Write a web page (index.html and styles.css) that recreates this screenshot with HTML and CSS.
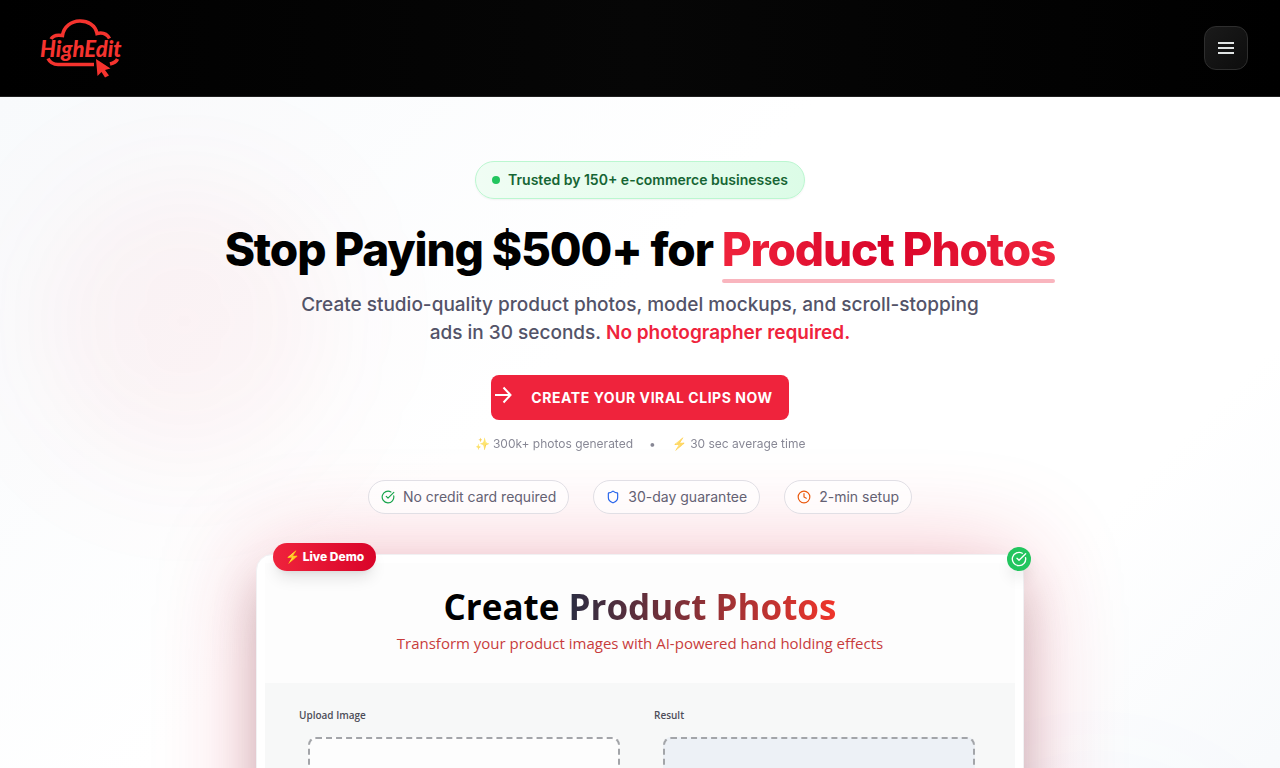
FILE: index.html
```html
<!DOCTYPE html>
<html lang="en">
<head>
    <meta charset="UTF-8">
    <meta name="viewport" content="width=device-width, initial-scale=1.0">
    <title>HighEdit</title>
    <link rel="stylesheet" href="styles.css">
</head>
<body>
    <header class="header">
        <a href="#" class="logo" aria-label="HighEdit">
            <svg width="84" height="60" viewBox="0 0 84 60" fill="none">
                <path d="M11 21C13 17.500 17 16.500 22.500 17.500C25 -1.500 54 -1.500 57 15.500C63 14 67 16 69.500 20.500" stroke="#f5332e" stroke-width="3.500"/>
                <path d="M8 40.500C10 44.500 13 46.500 18 46.500H54M70 46C74 45 76.500 43.500 77.500 41" stroke="#f5332e" stroke-width="3.500"/>
                <path d="M56 41L70.500 50.500L65 52L69 57.500L65 59.500L61.500 54L57.500 58Z" fill="#f5332e"/>
                <text x="0" y="39" class="logo-text">HighEdit</text>
            </svg>
        </a>
        <button class="menu-btn" type="button" aria-label="Open menu">
            <svg width="20" height="20" viewBox="0 0 20 20" stroke="#e0e4e4" stroke-width="2">
                <path d="M2 5H18M2 10H18M2 15H18"/>
            </svg>
        </button>
    </header>

    <main class="hero">
        <div class="glow glow-left"></div>
        <div class="glow glow-right"></div>

        <div class="trust"><span class="dot"></span>Trusted by 150+ e-commerce businesses</div>

        <h1>Stop Paying $500+ for <span class="highlight">Product Photos</span></h1>
        <p class="subtitle">Create studio-quality product photos, model mockups, and scroll-stopping<br> ads in 30 seconds. <strong>No photographer required.</strong></p>

        <button class="cta" type="button">
            <svg width="24" height="24" viewBox="0 0 24 24" fill="none" stroke="currentColor" stroke-width="2">
                <path d="M4 12H19.500M12.500 4.500L19.500 12L12.500 19.500"/>
            </svg>
            <span>CREATE YOUR VIRAL CLIPS NOW</span>
        </button>

        <div class="stats">
            <span>✨ 300k+ photos generated</span>
            <span>•</span>
            <span>⚡ 30 sec average time</span>
        </div>

        <ul class="perks">
            <li>
                <svg class="green" viewBox="0 0 24 24"><path d="M21.800 10A10 10 0 1 1 17 3.340"/><path d="m9 11 3 3L22 4"/></svg>
                No credit card required
            </li>
            <li>
                <svg class="blue" viewBox="0 0 24 24"><path d="M20 13c0 5-3.500 7.500-7.660 8.950a1 1 0 0 1-.67-.01C7.500 20.500 4 18 4 13V6a1 1 0 0 1 1-1c2 0 4.500-1.200 6.240-2.720a1.170 1.170 0 0 1 1.520 0C14.510 3.810 17 5 19 5a1 1 0 0 1 1 1z"/></svg>
                30-day guarantee
            </li>
            <li>
                <svg class="orange" viewBox="0 0 24 24"><circle cx="12" cy="12" r="10"/><path d="M12 6v6l4 2"/></svg>
                2-min setup
            </li>
        </ul>

        <!-- Live demo card -->
        <section class="demo">
            <span class="demo-tag">⚡ Live Demo</span>
            <span class="demo-check">
                <svg viewBox="0 0 24 24"><path d="M21.800 10A10 10 0 1 1 17 3.340"/><path d="m9 11 3 3L22 4"/></svg>
            </span>
            <div class="demo-head">
                <h2>Create <span>Product Photos</span></h2>
                <p>Transform your product images with AI-powered hand holding effects</p>
            </div>
            <div class="demo-body">
                <div class="panel">
                    <h3>Upload Image</h3>
                    <div class="drop"></div>
                </div>
                <div class="panel">
                    <h3>Result</h3>
                    <div class="drop drop-result"></div>
                </div>
            </div>
        </section>
    </main>
</body>
</html>
```
FILE: styles.css
```css
* {
    box-sizing: border-box;
}
body {
    margin: 0;
    font-family: Inter, "Noto Sans", sans-serif;
    color: #000;
    background: #fff;
}
h1, h2, h3, p, ul {
    margin: 0;
    padding: 0;
}
button {
    font-family: inherit;
    cursor: pointer;
}
.header {
    display: flex;
    align-items: center;
    justify-content: space-between;
    height: 97px;
    padding: 0 32px 0 40px;
    background: linear-gradient(90deg, #000, #060606 50%, #000);
    border-bottom: 1px solid #1f1f1f;
}
.logo svg {
    display: block;
    overflow: visible;
}
.logo-text {
    font: italic 900 22px Lato, sans-serif;
    fill: #f5332e;
}
.menu-btn {
    display: flex;
    align-items: center;
    justify-content: center;
    width: 44px;
    height: 44px;
    padding: 0;
    border: 1px solid #2e2e2e;
    border-radius: 12px;
    background: linear-gradient(135deg, #1a1a1a, #0d0d0d);
}
.hero {
    position: relative;
    display: flex;
    flex-direction: column;
    align-items: center;
    padding: 64px 24px;
    overflow: hidden;
    text-align: center;
    background: linear-gradient(135deg, #f8fafc 0%, #fff 35%, #fff 65%, #f1f5f9 100%);
}
.hero > * {
    position: relative;
}
.hero > .glow {
    position: absolute;
    width: 288px;
    height: 288px;
    border-radius: 50%;
    filter: blur(64px);
}
.glow-left {
    top: 80px;
    left: 40px;
    background: rgba(240, 35, 60, 0.05);
}
.glow-right {
    right: 40px;
    bottom: 80px;
    background: rgba(59, 130, 246, 0.03);
}
.trust {
    display: flex;
    align-items: center;
    gap: 8px;
    margin-bottom: 24px;
    padding: 8px 16px;
    border: 1px solid #bbf7d0;
    border-radius: 20px;
    background: linear-gradient(90deg, #f0fdf4, #dcfce7);
    box-shadow: 0 1px 2px rgba(0, 0, 0, 0.05);
    color: #166534;
    font-size: 14px;
    font-weight: 600;
    line-height: 20px;
}
.dot {
    width: 8px;
    height: 8px;
    border-radius: 50%;
    background: #22c55e;
}
h1 {
    margin-bottom: 16px;
    font-size: 46px;
    font-weight: 800;
    line-height: 52px;
    letter-spacing: -0.025em;
}
.highlight {
    position: relative;
    display: inline-block;
    background: linear-gradient(90deg, #ef233c, #d90429 50%, #ef233c);
    background-clip: text;
    -webkit-background-clip: text;
    color: transparent;
}
.highlight::after {
    content: "";
    position: absolute;
    left: 0;
    right: 0;
    bottom: -8px;
    height: 4px;
    border-radius: 2px;
    background: #f9b5be;
}
.subtitle {
    max-width: 768px;
    margin-bottom: 28px;
    color: #535368;
    font-size: 19px;
    font-weight: 500;
    line-height: 28px;
}
.subtitle strong {
    color: #ef233c;
    font-weight: 600;
}
.cta {
    display: flex;
    gap: 16px;
    height: 45px;
    margin-bottom: 16px;
    padding: 8px 16px 0 0;
    border: none;
    border-radius: 8px;
    background: #ef233c;
    color: #fff;
    font-size: 14px;
    font-weight: 700;
    line-height: 30px;
    letter-spacing: 0.04em;
}
.stats {
    display: flex;
    gap: 16px;
    margin-bottom: 28px;
    color: #555568;
    font-size: 12px;
    line-height: 16px;
    opacity: 0.7;
}
.perks {
    display: flex;
    flex-wrap: wrap;
    justify-content: center;
    gap: 24px;
    margin-bottom: 40px;
    list-style: none;
}
.perks li {
    display: flex;
    align-items: center;
    gap: 8px;
    padding: 6px 12px;
    border: 1px solid #e1dfe5;
    border-radius: 20px;
    background: rgba(255, 255, 255, 0.6);
    color: #646173;
    font-size: 14px;
    line-height: 20px;
    z-index: 1;
}
.perks svg, .demo-check svg {
    width: 14px;
    height: 14px;
    fill: none;
    stroke: currentColor;
    stroke-width: 2;
    stroke-linecap: round;
    stroke-linejoin: round;
}
.green {
    color: #16a34a;
}
.blue {
    color: #2563eb;
}
.orange {
    color: #ea580c;
}
.demo {
    width: 100%;
    max-width: 768px;
    padding: 8px;
    border: 1px solid #f1f1f3;
    border-radius: 16px;
    background: #fff;
    box-shadow: 0 25px 50px -6px rgba(0, 0, 0, 0.22), 0 0 100px rgba(225, 30, 60, 0.28);
    font-family: "Open Sans", "Noto Sans", sans-serif;
}
.demo-tag {
    position: absolute;
    top: -12px;
    left: 16px;
    padding: 6px 12px;
    border-radius: 14px;
    background: linear-gradient(90deg, #ef233c, #d90429);
    box-shadow: 0 10px 15px -3px rgba(0, 0, 0, 0.1), 0 4px 6px -4px rgba(0, 0, 0, 0.1);
    color: #fff;
    font: 800 12px/16px Inter, sans-serif;
}
.demo-check {
    position: absolute;
    top: -8px;
    right: -8px;
    display: flex;
    padding: 4px;
    border-radius: 50%;
    background: #22c55e;
    box-shadow: 0 10px 15px -3px rgba(0, 0, 0, 0.1);
    color: #fff;
}
.demo-check svg {
    width: 16px;
    height: 16px;
}
.demo-head {
    padding: 20px 0 28px;
    background: #fdfdfd;
}
.demo-head h2 {
    font-size: 35px;
    font-weight: 700;
    line-height: 48px;
}
.demo-head h2 span {
    background: linear-gradient(90deg, #2b2d42, #f0352b);
    background-clip: text;
    -webkit-background-clip: text;
    color: transparent;
}
.demo-head p {
    color: #c83c3c;
    font-size: 15px;
    font-weight: 500;
    line-height: 24px;
}
.demo-body {
    display: grid;
    grid-template-columns: 1fr 1fr;
    gap: 20px;
    padding: 24px 26px 32px 34px;
    background: #f7f8f8;
    text-align: left;
}
.panel h3 {
    margin-bottom: 14px;
    color: #4d4d58;
    font-size: 10px;
    font-weight: 600;
    line-height: 16px;
}
.drop {
    height: 320px;
    margin: 0 14px 0 9px;
    border: 2px dashed #a3a5a9;
    border-radius: 8px;
    background: #fdfdfd;
}
.drop-result {
    background: #edf1f6;
}
```
